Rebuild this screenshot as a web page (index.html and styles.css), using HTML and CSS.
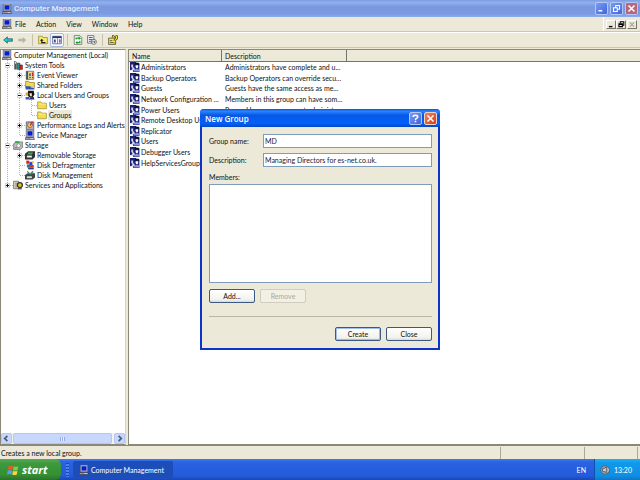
FILE: index.html
```html
<!DOCTYPE html>
<html lang="en">
<head>
    <meta charset="UTF-8">
    <meta name="viewport" content="width=device-width, initial-scale=1.0">
    <title>Computer Management</title>
    <link rel="stylesheet" href="styles.css">
</head>
<body>

    <!-- Shared icons -->
    <svg class="sprite" aria-hidden="true">
        <symbol id="i-pc" viewBox="0 0 16 16">
            <path d="M2 0h12v11H2z" fill="#c9cbd6" stroke="#3c3f58"/>
            <path d="M4 2h8v7H4z" fill="#0a1ec8"/>
            <path d="M1 12h13l1 3H0z" fill="#d8d8e0" stroke="#222"/>
            <path d="M6 11h5v1H6zM2 13h7v1H2z" fill="#555a80"/>
        </symbol>
        <symbol id="i-tools" viewBox="0 0 16 16">
            <path d="M2 1l4 2v12H2z" fill="#555"/>
            <path d="M7 5h4v10H7z" fill="#1b9a8c" stroke="#134"/>
            <path d="M11 8h4v7h-4z" fill="#d22" stroke="#611"/>
            <path d="M3 3h2v3H3z" fill="#dde"/>
        </symbol>
        <symbol id="i-event" viewBox="0 0 16 16">
            <path d="M2 2h12v13H2z" fill="#f1e68c" stroke="#444"/>
            <path d="M2 2h3v13H2z" fill="#356"/>
            <path d="M7 5h2v5H7zm0 6h2v2H7z" fill="#22b"/>
            <path d="M11 4h2v6h-2zm0 7h2v2h-2z" fill="#c22"/>
        </symbol>
        <symbol id="i-shared" viewBox="0 0 16 16">
            <path d="M1 2h5l1 2h8v8H1z" fill="#f5da4e" stroke="#7c6a17"/>
            <path d="M1 10h8l6 2v3H1z" fill="#2b55b0"/>
            <path d="M9 9l6 2v2l-6-1z" fill="#e8bd91"/>
        </symbol>
        <symbol id="i-folder" viewBox="0 0 16 16">
            <path d="M1 3h5l2 2h7v9H1z" fill="#f4dd4b" stroke="#937f1c"/>
            <path d="M2 6h12v1H2z" fill="#fff6ae"/>
        </symbol>
        <symbol id="i-group" viewBox="0 0 16 16">
            <path d="M0 0h10v13H0z" fill="#1a1f70"/>
            <path d="M5 2h10v14H5z" fill="#20277c"/>
            <path d="M2 4h3v4l3 3-1 2H2l2-3-2-2z" fill="#cfd2ee"/>
            <path d="M8 1h6l1 4-2-1H9L7 6z" fill="#0b0b18"/>
            <path d="M9 5h4v3l-1 2h-2L9 8z" fill="#fff"/>
            <path d="M6 15c1-3 2-4 5-4s4 1 5 4z" fill="#8f97dc"/>
        </symbol>
        <symbol id="i-localusers" viewBox="0 0 16 16">
            <path d="M5 1h9l1 6-3 5H7L4 8z" fill="#151515"/>
            <path d="M7 5h4v5H8z" fill="#f2d9b5"/>
            <path d="M1 4h4v5H1z" fill="#d9a441"/>
            <path d="M1 11h5l2 4H1z" fill="#3456c4"/>
            <path d="M8 12l6-1 1 4H7z" fill="#222b66"/>
        </symbol>
        <symbol id="i-perf" viewBox="0 0 16 16">
            <path d="M2 3h12v12H2z" fill="#b9b9b9" stroke="#333"/>
            <circle cx="8" cy="8" r="4" fill="#f1e040" stroke="#6a2c8e"/>
            <path d="M8 9l4-6" stroke="#c22" stroke-width="2"/>
        </symbol>
        <symbol id="i-storage" viewBox="0 0 16 16">
            <path d="M1 6l4-3h10v9l-3 3H1z" fill="#bdbdbd" stroke="#555"/>
            <path d="M3 2h7v3H3z" fill="#3da457"/>
            <circle cx="9" cy="9" r="3" fill="#f5f5f5" stroke="#777"/>
            <path d="M3 12h4v1H3z" fill="#a33"/>
        </symbol>
        <symbol id="i-removable" viewBox="0 0 16 16">
            <path d="M0 6l5-4h11v9l-4 4H0z" fill="#333"/>
            <path d="M3 9h8v3H3z" fill="#eee"/>
            <path d="M5 4h8l-2 3H4z" fill="#3cae4c"/>
        </symbol>
        <symbol id="i-defrag" viewBox="0 0 16 16">
            <path d="M2 1h5v5H2z" fill="#d92323"/>
            <path d="M7 3h5v5H7z" fill="#2546cf"/>
            <path d="M3 7h5v5H3z" fill="#1b7f88"/>
            <path d="M8 8h6v4H8z" fill="#e02b2b"/>
            <path d="M5 12h9v3H5z" fill="#333a7b"/>
            <path d="M11 2h3v3h-3z" fill="#eec331"/>
        </symbol>
        <symbol id="i-disk" viewBox="0 0 16 16">
            <path d="M0 8l4-3h12v7l-4 3H0z" fill="#444"/>
            <path d="M3 10h8v3H3z" fill="#cfe3d4"/>
            <path d="M4 1l4 4 4-4 2 2-5 5-6-5z" fill="#3f8f77"/>
        </symbol>
        <symbol id="i-services" viewBox="0 0 16 16">
            <path d="M1 2h8v12H1z" fill="#e7e1c4" stroke="#444"/>
            <path d="M3 5h4M3 8h4M3 11h4" stroke="#555"/>
            <circle cx="11" cy="8" r="4" fill="#d8c62c" stroke="#333" stroke-width="2"/>
            <path d="M8 12h6v3H8z" fill="#555"/>
        </symbol>
    </svg>

    <div class="window">
        <header class="titlebar">
            <svg class="icon"><use href="#i-pc"/></svg>
            <h1>Computer Management</h1>
            <div class="controls">
                <button class="ctl" aria-label="Minimize"><svg viewBox="0 0 12 12"><path d="M2 8h5v2H2z" fill="#fff"/></svg></button>
                <button class="ctl" aria-label="Restore"><svg viewBox="0 0 12 12"><path d="M5 5V2h5v5H8M2 5h5v5H2z" fill="none" stroke="#fff" stroke-width="1.5"/></svg></button>
                <button class="ctl ctl-close-dim" aria-label="Close window"><svg viewBox="0 0 12 12"><path d="M2 2l8 8M10 2l-8 8" stroke="#fff" stroke-width="2"/></svg></button>
            </div>
        </header>

        <nav class="menubar">
            <svg class="icon"><use href="#i-pc"/></svg>
            <button>File</button>
            <button>Action</button>
            <button>View</button>
            <button>Window</button>
            <button>Help</button>
            <div class="mdi">
                <button aria-label="Minimize child"><svg viewBox="0 0 10 10"><path d="M2 7h5v2H2z"/></svg></button>
                <button aria-label="Restore child"><svg viewBox="0 0 10 10"><path d="M4 3V1h5v5H7M2 4h5v4H2zM2 5h5" fill="none" stroke="#000" stroke-width="1.5"/></svg></button>
                <button class="mdi-close" aria-label="Close child" disabled><svg viewBox="0 0 10 10"><path d="M2 2l6 6M8 2l-6 6" stroke="#a5a294" stroke-width="1.5"/></svg></button>
            </div>
        </nav>

        <div class="toolbar">
            <button aria-label="Back"><svg viewBox="0 0 16 16"><path d="M1 8l6-5v3h8v4H7v3z" fill="#25c4c8" stroke="#0b4a50"/></svg></button>
            <button aria-label="Forward" disabled><svg viewBox="0 0 16 16"><path d="M15 8l-6-5v3H2v4h7v3z" fill="#b9b6a8"/></svg></button>
            <span class="sep"></span>
            <button aria-label="Up one level"><svg viewBox="0 0 16 16"><path d="M1 2h6l1 2h7v10H1z" fill="#f7ec66" stroke="#7d7323"/><path d="M6 6l3 3H7v2h5v2H5V9H3z" fill="#222"/></svg></button>
            <button class="pressed" aria-label="Show tree"><svg viewBox="0 0 16 16"><path d="M1 2h14v12H1z" fill="#fff" stroke="#283074"/><path d="M1 2h14v3H1z" fill="#283074"/><path d="M3 7h3v5H3zM8 5h1v9H8zM11 7h3v2h-3zm0 3h3v2h-3z" fill="#42498f"/></svg></button>
            <span class="sep"></span>
            <button aria-label="Refresh"><svg viewBox="0 0 16 16"><path d="M2 1h9l3 3v11H2z" fill="#fff" stroke="#444"/><path d="M5 7V5h5M11 9v3H6" stroke="#14a329" stroke-width="2" fill="none"/><path d="M9 2l4 3-4 3zM7 9l-3 3 3 3z" fill="#14a329"/></svg></button>
            <button aria-label="Export list"><svg viewBox="0 0 16 16"><path d="M1 1h10v12H1z" fill="#fff" stroke="#283074"/><path d="M3 4h6M3 7h6M3 10h5" stroke="#42498f" stroke-width="1.5"/><circle cx="11" cy="11" r="4" fill="#fff" stroke="#333"/><path d="M8 11h5M11 9l2 2-2 2" stroke="#222" fill="none"/></svg></button>
            <span class="sep"></span>
            <button aria-label="New group"><svg viewBox="0 0 16 16"><path d="M1 5h11v10H1z" fill="#f6e25b" stroke="#222"/><path d="M3 9h4M3 12h5" stroke="#222"/><path d="M8 4c0-4 6-4 6 0 0 3-3 2-3 5M11 11v2" fill="none" stroke="#222" stroke-width="4"/><path d="M8 4c0-4 6-4 6 0 0 3-3 2-3 5M11 11v2" fill="none" stroke="#f5e535" stroke-width="2"/></svg></button>
        </div>

        <main class="panes">
            <section class="tree-pane">
                <div class="tree">
                    <div class="node root"><svg class="icon"><use href="#i-pc"/></svg><span>Computer Management (Local)</span></div>
                    <ul>
                        <li>
                            <div class="node"><i class="exp minus"></i><svg class="icon"><use href="#i-tools"/></svg><span>System Tools</span></div>
                            <ul>
                                <li><div class="node"><i class="exp plus"></i><svg class="icon"><use href="#i-event"/></svg><span>Event Viewer</span></div></li>
                                <li><div class="node"><i class="exp plus"></i><svg class="icon"><use href="#i-shared"/></svg><span>Shared Folders</span></div></li>
                                <li>
                                    <div class="node"><i class="exp minus"></i><svg class="icon"><use href="#i-localusers"/></svg><span>Local Users and Groups</span></div>
                                    <ul>
                                        <li><div class="node"><i class="exp"></i><svg class="icon"><use href="#i-folder"/></svg><span>Users</span></div></li>
                                        <li><div class="node"><i class="exp"></i><svg class="icon"><use href="#i-folder"/></svg><span class="selected">Groups</span></div></li>
                                    </ul>
                                </li>
                                <li><div class="node"><i class="exp plus"></i><svg class="icon"><use href="#i-perf"/></svg><span>Performance Logs and Alerts</span></div></li>
                                <li><div class="node"><i class="exp"></i><svg class="icon"><use href="#i-pc"/></svg><span>Device Manager</span></div></li>
                            </ul>
                        </li>
                        <li>
                            <div class="node"><i class="exp minus"></i><svg class="icon"><use href="#i-storage"/></svg><span>Storage</span></div>
                            <ul>
                                <li><div class="node"><i class="exp plus"></i><svg class="icon"><use href="#i-removable"/></svg><span>Removable Storage</span></div></li>
                                <li><div class="node"><i class="exp"></i><svg class="icon"><use href="#i-defrag"/></svg><span>Disk Defragmenter</span></div></li>
                                <li><div class="node"><i class="exp"></i><svg class="icon"><use href="#i-disk"/></svg><span>Disk Management</span></div></li>
                            </ul>
                        </li>
                        <li><div class="node"><i class="exp plus"></i><svg class="icon"><use href="#i-services"/></svg><span>Services and Applications</span></div></li>
                    </ul>
                </div>
                <div class="scrollbar">
                    <button aria-label="Scroll left"><svg viewBox="0 0 10 10"><path d="M6 2L3 5l3 3" fill="none" stroke="#4d6185" stroke-width="2"/></svg></button>
                    <div class="track"><div class="thumb"></div></div>
                    <button aria-label="Scroll right"><svg viewBox="0 0 10 10"><path d="M4 2l3 3-3 3" fill="none" stroke="#4d6185" stroke-width="2"/></svg></button>
                </div>
            </section>

            <section class="list-pane">
                <table>
                    <thead>
                        <tr>
                            <th class="col-name">Name</th>
                            <th class="col-desc">Description</th>
                            <th></th>
                        </tr>
                    </thead>
                    <tbody>
                        <tr><td><svg class="icon"><use href="#i-group"/></svg>Administrators</td><td>Administrators have complete and u...</td></tr>
                        <tr><td><svg class="icon"><use href="#i-group"/></svg>Backup Operators</td><td>Backup Operators can override secu...</td></tr>
                        <tr><td><svg class="icon"><use href="#i-group"/></svg>Guests</td><td>Guests have the same access as me...</td></tr>
                        <tr><td><svg class="icon"><use href="#i-group"/></svg>Network Configuration ...</td><td>Members in this group can have som...</td></tr>
                        <tr><td><svg class="icon"><use href="#i-group"/></svg>Power Users</td><td>Power Users possess most administ...</td></tr>
                        <tr><td><svg class="icon"><use href="#i-group"/></svg>Remote Desktop Users</td><td></td></tr>
                        <tr><td><svg class="icon"><use href="#i-group"/></svg>Replicator</td><td></td></tr>
                        <tr><td><svg class="icon"><use href="#i-group"/></svg>Users</td><td></td></tr>
                        <tr><td><svg class="icon"><use href="#i-group"/></svg>Debugger Users</td><td></td></tr>
                        <tr><td><svg class="icon"><use href="#i-group"/></svg>HelpServicesGroup</td><td></td></tr>
                    </tbody>
                </table>
            </section>
        </main>

        <div class="statusbar">
            <span class="status-text">Creates a new local group.</span>
            <span class="status-mid"></span>
            <span class="status-end"></span>
        </div>
    </div>

    <form class="dialog" role="dialog" aria-labelledby="dialogTitle">
        <div class="dialog-title">
            <h2 id="dialogTitle">New Group</h2>
            <button type="button" class="ctl" aria-label="Help on item"><svg viewBox="0 0 12 12"><path d="M3 4c0-3 6-3 6 0 0 2-3 1-3 4M6 9v2" fill="none" stroke="#fff" stroke-width="2"/></svg></button>
            <button type="button" class="ctl ctl-close" aria-label="Close dialog"><svg viewBox="0 0 12 12"><path d="M2 2l8 8M10 2l-8 8" stroke="#fff" stroke-width="2"/></svg></button>
        </div>
        <div class="dialog-body">
            <div class="field">
                <label for="groupName">Group name:</label>
                <input type="text" id="groupName" value="MD">
            </div>
            <div class="field">
                <label for="description">Description:</label>
                <input type="text" id="description" value="Managing Directors for es-net.co.uk.">
            </div>
            <label class="members-label" for="members">Members:</label>
            <select id="members" class="members" size="8"></select>
            <div class="buttons">
                <button type="button" class="btn">Add...</button>
                <button type="button" class="btn" disabled>Remove</button>
            </div>
            <hr>
            <div class="buttons buttons-end">
                <button type="button" class="btn btn-default">Create</button>
                <button type="button" class="btn">Close</button>
            </div>
        </div>
    </form>

    <footer class="taskbar">
        <button class="start">
            <svg viewBox="0 0 16 16"><path d="M2 3c2-1 4-1 6 0L7 8C5 7 3 7 1 8z" fill="#f0562c"/><path d="M9 3c2 1 4 1 6 0l-1 5c-2 1-4 1-6 0z" fill="#7ed143"/><path d="M1 9c2-1 4-1 6 0l-1 5c-2-1-4-1-6 0z" fill="#5b9cf5"/><path d="M8 9c2 1 4 1 6 0l-1 5c-2 1-4 1-6 0z" fill="#fbd33c"/></svg>
            start
        </button>
        <span class="grip"></span>
        <button class="task"><svg class="icon"><use href="#i-pc"/></svg>Computer Management</button>
        <span class="lang">EN</span>
        <div class="tray">
            <svg viewBox="0 0 16 16"><circle cx="8" cy="8" r="7" fill="#8e9aa8" stroke="#4a5561"/><path d="M4 6h3l3-3v9L7 10H4z" fill="#dfe3e8" stroke="#333"/><path d="M12 5c2 2 2 4 0 6" fill="none" stroke="#eee"/></svg>
            <span>13:20</span>
        </div>
    </footer>

</body>
</html>
```
FILE: styles.css
```css
* {
    box-sizing: border-box;
}

body {
    margin: 0;
    height: 100vh;
    display: flex;
    flex-direction: column;
    position: relative;
    overflow: hidden;
    font-family: Lato, "Liberation Sans", sans-serif;
    font-size: 7px;
    line-height: 10px;
    color: #111;
    background: #ece9d8;
}

button, input, select {
    font: inherit;
    color: inherit;
    margin: 0;
    padding: 0;
}

h1, h2 {
    margin: 0;
    color: #fff;
}

ul {
    list-style: none;
    margin: 0;
    padding: 0;
}

svg {
    display: block;
}

.sprite {
    display: none;
}

.icon {
    width: 10px;
    height: 10px;
    flex: none;
}

.window {
    flex: 1;
    min-height: 0;
    display: flex;
    flex-direction: column;
}

/* Title bar */
.titlebar {
    height: 17px;
    display: flex;
    align-items: center;
    gap: 2px;
    padding: 0 2px;
    background: linear-gradient(#7d9ce2, #8fb0ee 15%, #7a98e0 40%, #7c9be3 80%, #8aabec);
}

.titlebar h1 {
    flex: 1;
    font-family: Roboto, sans-serif;
    font-size: 8px;
    font-weight: 500;
    color: #e4ecfc;
}

.controls {
    display: flex;
    gap: 2px;
}

.ctl {
    width: 13px;
    height: 13px;
    display: flex;
    align-items: center;
    justify-content: center;
    border: 1px solid #b4c6f5;
    border-radius: 2px;
    background: linear-gradient(135deg, #7b9bf2, #3c66dd);
}

.ctl svg {
    width: 9px;
    height: 9px;
}

.ctl-close-dim {
    background: #b9667c;
}

.ctl-close {
    border-color: #f4cfc4;
    background: linear-gradient(135deg, #ec8564, #d0401c);
}

/* Menu and toolbar */
.menubar {
    height: 15px;
    display: flex;
    align-items: center;
    padding-left: 2px;
    border-bottom: 1px solid #c9c6b6;
}

.menubar > button {
    padding: 0 3px;
    margin-right: 4px;
    border: 0;
    background: none;
}

.mdi {
    display: flex;
    align-items: center;
    align-self: stretch;
    margin-left: auto;
    padding: 0 3px 0 2px;
    border-left: 1px solid #fff;
}

.mdi button {
    width: 10px;
    height: 9px;
    border: 1px solid;
    border-color: #fff #77746a #77746a #fff;
    background: #ece9d8;
}

.mdi svg {
    width: 8px;
    height: 7px;
}

.mdi .mdi-close {
    margin-left: 1px;
}

.toolbar {
    height: 16px;
    display: flex;
    align-items: center;
    padding-left: 1px;
    border-top: 1px solid #fff;
    border-bottom: 1px solid #c9c6b6;
}

.toolbar button {
    width: 14px;
    height: 14px;
    display: flex;
    align-items: center;
    justify-content: center;
    border: 1px solid transparent;
    border-radius: 2px;
    background: none;
}

.toolbar svg {
    width: 10px;
    height: 10px;
    flex: none;
}

.toolbar .pressed {
    border-color: #a9b9dc;
    background: #fafafa;
}

.sep {
    width: 1px;
    height: 12px;
    margin: 0 3px;
    background: #c5c2b2;
}

/* Tree and list */
.panes {
    flex: 1;
    min-height: 0;
    display: flex;
    gap: 2px;
    padding-top: 1px;
}

.tree-pane {
    width: 126px;
    flex: none;
    display: flex;
    flex-direction: column;
    border: 1px solid #8b887a;
    border-right-color: #d8d4c2;
    background: #fff;
}

.tree {
    flex: 1;
    overflow: hidden;
    white-space: nowrap;
}

.node {
    height: 10px;
    display: flex;
    align-items: center;
}

.node span {
    padding: 0 1px 0 2px;
}

.node.root {
    padding-left: 1px;
}

.node .selected {
    margin-left: 1px;
    padding: 0 1px;
    background: #ece9d8;
}

.tree li {
    background: repeating-linear-gradient(#b0b0b0 0 1px, #fff 1px 2px) 6px 0 / 1px 100% no-repeat;
}

.tree li:last-child {
    background-size: 1px 5px;
}

.tree li li {
    margin-left: 12px;
}

.exp {
    width: 12px;
    height: 10px;
    flex: none;
    display: flex;
    align-items: center;
    justify-content: center;
    background: repeating-linear-gradient(90deg, #b0b0b0 0 1px, #fff 1px 2px) 7px 5px / 5px 1px no-repeat;
}

.plus::before,
.minus::before {
    content: "";
    width: 5px;
    height: 5px;
    margin-left: 1px;
    outline: 1px solid #d5d2c5;
    outline-offset: -1px;
    background: linear-gradient(#111, #111) center / 3px 1px no-repeat, #fff;
}

.plus::before {
    background: linear-gradient(#111, #111) center / 3px 1px no-repeat, linear-gradient(#111, #111) center / 1px 3px no-repeat, #fff;
}

.scrollbar {
    height: 11px;
    display: flex;
    gap: 1px;
    background: #f3f2ec;
}

.scrollbar button,
.thumb {
    border: 1px solid #b3c6f4;
    border-radius: 2px;
    background: #c8d7fc;
}

.scrollbar button {
    width: 11px;
}

.track {
    flex: 1;
    padding-right: 1px;
}

.thumb {
    width: 100%;
    height: 11px;
    background: repeating-linear-gradient(90deg, #94abe6 0 1px, #e8effe 1px 2px) center / 5px 4px no-repeat, #c8d7fc;
}

.list-pane {
    flex: 1;
    min-width: 0;
    border: 1px solid #8b887a;
    border-right: 0;
    background: #fff;
}

.list-pane table {
    width: 100%;
    height: 118px;
    table-layout: fixed;
    border-collapse: separate;
    border-spacing: 0;
}

.list-pane th {
    height: 12px;
    padding: 0 3px;
    text-align: left;
    font-weight: normal;
    border-right: 1px solid #77746a;
    border-bottom: 1px solid #77746a;
    background: #ece9d8;
}

.list-pane th:last-child {
    border-right: 0;
}

.col-name {
    width: 93px;
}

.col-desc {
    width: 125px;
}

.list-pane td {
    padding: 0 3px;
    white-space: nowrap;
}

.list-pane td:first-child {
    padding: 0 0 0 1px;
}

.list-pane td .icon {
    display: inline-block;
    vertical-align: top;
    margin-right: 1px;
}

.statusbar {
    height: 14px;
    display: flex;
    align-items: center;
    padding: 0 2px 0 0;
    border-top: 1px solid #8b887a;
}

.statusbar span {
    height: 12px;
    border-right: 1px solid #aca899;
}

.status-text {
    flex: 1;
    padding: 1px;
}

.status-mid {
    width: 84px;
}

.status-end {
    width: 53px;
}

/* New Group dialog */
.dialog {
    position: absolute;
    left: 200px;
    top: 109px;
    width: 240px;
    border: 2px solid #0a35c8;
    border-top: 0;
    border-radius: 4px 4px 0 0;
    background: #ece9d8;
}

.dialog-title {
    height: 18px;
    display: flex;
    align-items: center;
    gap: 2px;
    margin: 0 -2px;
    padding: 1px 3px 0 5px;
    border-radius: 4px 4px 0 0;
    background: linear-gradient(#0a4fd8, #2a86ff 12%, #0558e6 35%, #0560f8 80%, #0348c8);
}

.dialog-title h2 {
    flex: 1;
    font-family: "Open Sans", sans-serif;
    font-size: 8px;
    font-weight: 600;
}

.dialog-body {
    padding: 7px 6px 7px 7px;
}

.field {
    display: flex;
    align-items: center;
    margin-bottom: 5px;
}

.field label {
    width: 54px;
}

.field input {
    flex: 1;
    min-width: 0;
    height: 14px;
    padding: 0 1px;
    border: 1px solid #7f9db9;
    background: #fff;
    color: #223;
}

.members-label {
    display: block;
    padding-bottom: 2px;
}

.members {
    display: block;
    width: 100%;
    height: 99px;
    border: 1px solid #7f9db9;
    border-radius: 0;
    background: #fff;
}

.buttons {
    display: flex;
    gap: 5px;
    margin-top: 6px;
}

.btn {
    width: 46px;
    height: 14px;
    border: 1px solid #3a5a86;
    border-radius: 2px;
    background: linear-gradient(#fff, #f3f2ec 80%, #dcd8cc);
}

.btn:disabled {
    color: #aca899;
    border-color: #d0cdbe;
    background: #f2f0e4;
}

.btn-default {
    box-shadow: inset 0 0 0 1px #a4bdf0;
}

.dialog hr {
    height: 1px;
    margin: 13px 0 10px;
    border: 0;
    background: #bab6a5;
}

.buttons-end {
    justify-content: flex-end;
}

/* Taskbar */
.taskbar {
    height: 21px;
    display: flex;
    align-items: center;
    color: #fff;
    background: linear-gradient(#3c7cf0, #2a62e0 15%, #245bdb 80%, #1d46b0);
}

.start {
    width: 61px;
    height: 21px;
    display: flex;
    align-items: center;
    gap: 3px;
    padding-left: 7px;
    border: 0;
    border-radius: 0 6px 6px 0;
    background: linear-gradient(#5aa85a, #3c9a3c 20%, #358f35 75%, #2a722a);
    font-family: "Open Sans", sans-serif;
    font-size: 11px;
    font-weight: 700;
    font-style: italic;
    color: #fff;
}

.start svg {
    width: 12px;
    height: 12px;
}

.grip {
    width: 3px;
    height: 14px;
    margin: 0 4px 0 5px;
    background: repeating-linear-gradient(#1b46b4 0 1px, #4b82f0 1px 3px);
}

.task {
    width: 100px;
    height: 17px;
    display: flex;
    align-items: center;
    gap: 2px;
    padding-left: 6px;
    border: 0;
    border-radius: 2px;
    background: #1c4db8;
    color: #fff;
}

.lang {
    margin-left: auto;
    padding-right: 8px;
}

.tray {
    width: 46px;
    height: 21px;
    display: flex;
    align-items: center;
    gap: 4px;
    padding-left: 5px;
    border-left: 1px solid #0b52a8;
    background: linear-gradient(#1cb0f4, #1298ea 20%, #108ee4 80%, #0f76c4);
}

.tray svg {
    width: 10px;
    height: 10px;
}
```
